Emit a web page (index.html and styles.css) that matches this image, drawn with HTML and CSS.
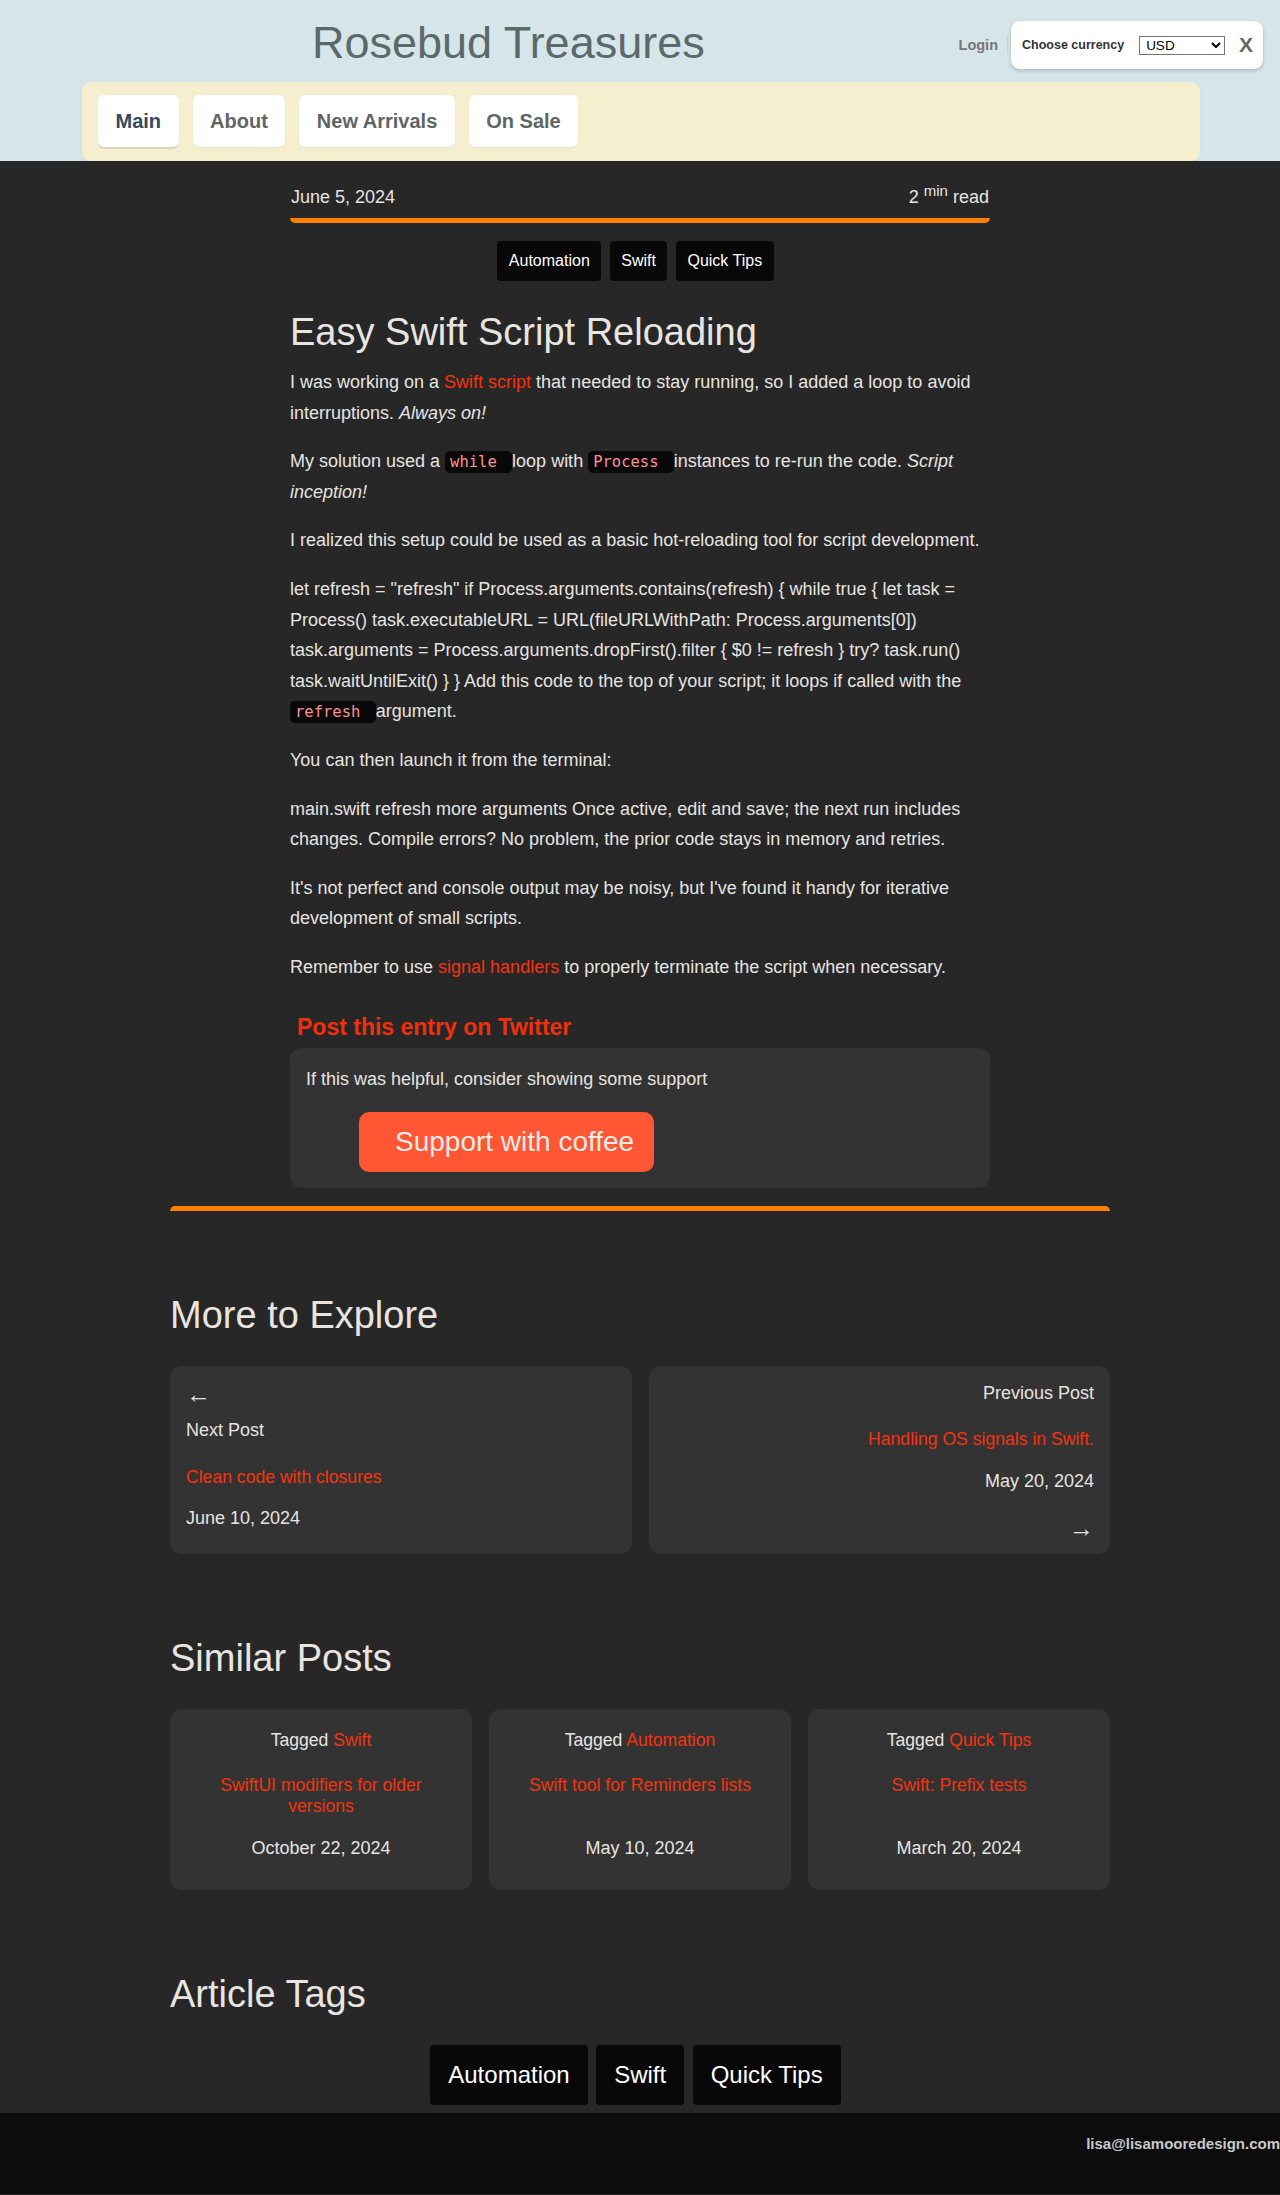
FILE: index.html
```html
<!DOCTYPE html>
<html lang="en">
<head>
<meta charset="utf-8">
<title>Easy Swift Script Reloading - Rosebud Treasures</title>
<link rel="stylesheet" href="styles.css">
</head>
<body>
<header class="site-header">
  <div class="header-top">
    <div class="brand">Rosebud Treasures</div>
    <div class="account">
      <a class="login" href="#">Login</a>
      <div class="currency">
        <label class="currency-label" for="cur">Choose currency</label>
        <select id="cur" class="currency-select"><option>USD</option><option>EUR</option><option>GBP</option></select>
        <span class="currency-close">X</span>
      </div>
    </div>
  </div>
  <nav class="main-nav">
    <a class="nav-btn active" href="#">Main</a>
    <a class="nav-btn" href="#">About</a>
    <a class="nav-btn" href="#">New Arrivals</a>
    <a class="nav-btn" href="#">On Sale</a>
  </nav>
</header>

<main class="page">
  <article class="post">
    <div class="post-meta">
      <span>June 5, 2024</span>
      <span>2 <sup>min</sup> read</span>
    </div>
    <div class="tag-row">
      <a class="tag" href="#">Automation</a>
      <a class="tag" href="#">Swift</a>
      <a class="tag" href="#">Quick Tips</a>
    </div>
    <h1 class="post-title">Easy Swift Script Reloading</h1>
    <p>I was working on a <a class="link" href="#">Swift script</a> that needed to stay running, so I added a loop to avoid interruptions. <em>Always on!</em></p>
    <p>My solution used a <code>while&nbsp;</code>loop with <code>Process&nbsp;</code>instances to re-run the code. <em>Script inception!</em></p>
    <p>I realized this setup could be used as a basic hot-reloading tool for script development.</p>
    <p>let refresh = "refresh" if Process.arguments.contains(refresh) { while true { let task = Process() task.executableURL = URL(fileURLWithPath: Process.arguments[0]) task.arguments = Process.arguments.dropFirst().filter { $0 != refresh } try? task.run() task.waitUntilExit() } } Add this code to the top of your script; it loops if called with the <code>refresh&nbsp;</code>argument.</p>
    <p>You can then launch it from the terminal:</p>
    <p>main.swift refresh more arguments Once active, edit and save; the next run includes changes. Compile errors? No problem, the prior code stays in memory and retries.</p>
    <p>It's not perfect and console output may be noisy, but I've found it handy for iterative development of small scripts.</p>
    <p>Remember to use <a class="link" href="#">signal handlers</a> to properly terminate the script when necessary.</p>
    <h3 class="share">Post this entry on Twitter</h3>
    <div class="support">
      <p class="support-text">If this was helpful, consider showing some support</p>
      <a class="coffee-btn" href="#">Support with coffee</a>
    </div>
  </article>

  <div class="wide">
    <div class="divider"></div>

    <section class="block">
      <h2 class="block-title">More to Explore</h2>
      <div class="post-nav">
        <a class="nav-card nav-next" href="#">
          <span class="arrow">&#8592;</span>
          <span class="nav-label next-label">Next Post</span>
          <span class="nav-link next-link">Clean code with closures</span>
          <span class="nav-date next-date">June 10, 2024</span>
        </a>
        <a class="nav-card nav-prev" href="#">
          <span class="nav-label">Previous Post</span>
          <span class="nav-link prev-link">Handling OS signals in Swift.</span>
          <span class="nav-date prev-date">May 20, 2024</span>
          <span class="arrow prev-arrow">&#8594;</span>
        </a>
      </div>
    </section>

    <section class="block">
      <h2 class="block-title">Similar Posts</h2>
      <div class="similar-grid">
        <div class="sim-card">
          <div class="sim-tag">Tagged <a class="link" href="#">Swift</a></div>
          <div class="sim-title"><a class="link" href="#">SwiftUI modifiers for older versions</a></div>
          <div class="sim-date">October 22, 2024</div>
        </div>
        <div class="sim-card">
          <div class="sim-tag">Tagged <a class="link" href="#">Automation</a></div>
          <div class="sim-title"><a class="link" href="#">Swift tool for Reminders lists</a></div>
          <div class="sim-date">May 10, 2024</div>
        </div>
        <div class="sim-card">
          <div class="sim-tag">Tagged <a class="link" href="#">Quick Tips</a></div>
          <div class="sim-title"><a class="link" href="#">Swift: Prefix tests</a></div>
          <div class="sim-date">March 20, 2024</div>
        </div>
      </div>
    </section>

    <section class="block">
      <h2 class="block-title">Article Tags</h2>
      <div class="big-tags">
        <a class="big-tag" href="#">Automation</a>
        <a class="big-tag" href="#">Swift</a>
        <a class="big-tag" href="#">Quick Tips</a>
      </div>
    </section>
  </div>
</main>

<footer class="site-footer">
  <span class="footer-mail">lisa@lisamooredesign.com</span>
</footer>
</body>
</html>
```

FILE: styles.css
```css
* { box-sizing: border-box; }

html, body {
  margin: 0;
  padding: 0;
}

body {
  background: #272727;
  color: #e6e4e1;
  font-family: "Liberation Sans", Arial, Helvetica, sans-serif;
  font-size: 18px;
  line-height: 1.7;
}

a { text-decoration: none; color: inherit; }

/* ---------- header ---------- */
.site-header {
  background: #d6e5ea;
  padding-top: 17px;
}

.header-top {
  display: flex;
  align-items: flex-start;
  height: 52px;
  padding-right: 17px;
}

.brand {
  margin-left: 312px;
  font-size: 45px;
  line-height: 52px;
  color: #5c6969;
}

.account {
  margin-left: auto;
  margin-top: 4px;
  display: flex;
  align-items: center;
}

.login {
  font-size: 14.5px;
  font-weight: bold;
  color: #777;
  line-height: 18px;
  padding-right: 9px;
  border-right: 1px solid #c9d6da;
  margin-right: 3px;
}

.currency {
  display: flex;
  align-items: center;
  width: 252px;
  height: 48px;
  padding: 0 10px 0 11px;
  background: #fff;
  border-radius: 9px;
  box-shadow: 0 2px 4px rgba(0, 0, 0, 0.18);
}

.currency-label {
  font-size: 12.5px;
  font-weight: bold;
  color: #333;
  line-height: 16px;
}

.currency-select {
  margin-left: 15px;
  width: 86px;
  height: 19px;
  font-family: "Liberation Sans", Arial, sans-serif;
  font-size: 13.5px;
  border: 1px solid #767676;
  border-radius: 0;
  background: #fff;
  color: #000;
  padding: 0 0 0 2px;
}

.currency-close {
  margin-left: auto;
  font-size: 21px;
  font-weight: bold;
  color: #666;
  line-height: 22px;
}

.main-nav {
  margin: 13px 80px 0 82px;
  background: #f5eecf;
  border-radius: 9px 9px 8px 8px;
  padding: 13px 16px 14px;
  display: flex;
  gap: 14px;
  box-shadow: 0 1px 2px rgba(0, 0, 0, 0.08);
}

.nav-btn {
  display: block;
  height: 52px;
  line-height: 52px;
  padding: 0 17.5px;
  background: #fff;
  border-radius: 6px;
  font-size: 20px;
  font-weight: bold;
  color: #5e6565;
  box-shadow: 0 1px 2px rgba(0, 0, 0, 0.06);
}

.nav-btn.active {
  color: #34495e;
  box-shadow: 0 2px 1px rgba(0, 0, 0, 0.10);
}

/* ---------- article ---------- */
.page {
  padding-top: 21px;
}

.post {
  width: 700px;
  margin: 0 auto;
}

.post-meta {
  display: flex;
  justify-content: space-between;
  line-height: 30px;
  padding: 0 1px 6px;
  border-bottom: 5px solid #ff8000;
  border-radius: 0 0 5px 5px;
}

.post-meta sup {
  font-size: 15px;
  line-height: 0;
}

.tag-row {
  margin-top: 18px;
  display: flex;
  justify-content: center;
  gap: 8.5px;
  padding-right: 9px;
}

.tag {
  display: block;
  background: #080808;
  color: #fff;
  font-size: 16px;
  line-height: 18px;
  padding: 11px 11.5px;
  border-radius: 4px;
}

.post-title {
  margin: 29px 0 13px;
  font-size: 38px;
  line-height: 44px;
  font-weight: normal;
  color: #e8e5e1;
}

.post p {
  margin: 0 0 18px;
}

.link {
  color: #f5330f;
}

code {
  font-family: "DejaVu Sans Mono", "Liberation Mono", monospace;
  font-size: 15.5px;
  color: #ff9090;
  background: #080808;
  padding: 2px 6px 2px 5px;
  border-radius: 5px;
}

.share {
  margin: 31px 0 8px;
  padding-left: 7px;
  font-size: 23px;
  line-height: 26px;
  font-weight: bold;
  color: #f0300c;
}

.support {
  background: #333;
  border-radius: 12px;
  padding: 16px;
}

.post .support-text {
  margin: 0 0 18px;
}

.coffee-btn {
  display: inline-block;
  margin-left: 53px;
  font-size: 28px;
  line-height: 32px;
  padding: 14px 20px 14px 36px;
  background: #ff5733;
  color: #f1ecec;
  border-radius: 10px;
}

/* ---------- wide sections ---------- */
.wide {
  width: 940px;
  margin: 0 auto;
}

.divider {
  margin-top: 18px;
  height: 5px;
  background: #ff8000;
  border-radius: 5px 5px 0 0;
}

.block-title {
  margin: 82px 0 29px;
  font-size: 38px;
  line-height: 44px;
  font-weight: normal;
  color: #e8e5e1;
}

.post-nav {
  display: grid;
  grid-template-columns: 1fr 1fr;
  gap: 17px;
}

.nav-card {
  display: flex;
  flex-direction: column;
  background: #333;
  border-radius: 12px;
  padding: 16px;
}

.nav-prev {
  align-items: flex-end;
  text-align: right;
  padding: 14px 16px 14px;
}

.arrow {
  font-size: 25px;
  line-height: 24px;
  color: #e6e4e1;
}

.nav-label, .nav-date {
  font-size: 18px;
  line-height: 26px;
}

.nav-link {
  font-size: 17.6px;
  line-height: 26px;
  color: #f5330f;
}

.next-label { margin-top: 11px; }
.next-link { margin-top: 21px; }
.next-date { margin-top: 15px; }

.prev-link { margin-top: 20px; }
.prev-date { margin-top: 16px; }
.prev-arrow { margin-top: 22px; }

.similar-grid {
  display: grid;
  grid-template-columns: repeat(3, 1fr);
  gap: 17px;
}

.sim-card {
  background: #333;
  border-radius: 12px;
  padding: 21px 24px 31px;
  text-align: center;
}

.sim-tag {
  font-size: 17.6px;
  line-height: 20px;
}

.sim-title {
  margin-top: 25px;
  min-height: 42px;
  font-size: 17.6px;
  line-height: 21px;
}

.sim-date {
  margin-top: 21px;
  font-size: 18px;
  line-height: 21px;
}

.big-tags {
  display: flex;
  justify-content: center;
  gap: 8.5px;
  padding-right: 9px;
}

.big-tag {
  display: block;
  background: #080808;
  color: #fff;
  font-size: 24px;
  line-height: 28px;
  padding: 16px 18px;
  border-radius: 4px;
}

/* ---------- footer ---------- */
.site-footer {
  margin-top: 8px;
  background: #0c0c0c;
  padding: 22px 0 42px;
  text-align: right;
  line-height: 17px;
}

.footer-mail {
  font-size: 15px;
  font-weight: bold;
  color: #c9c9c9;
}
```
